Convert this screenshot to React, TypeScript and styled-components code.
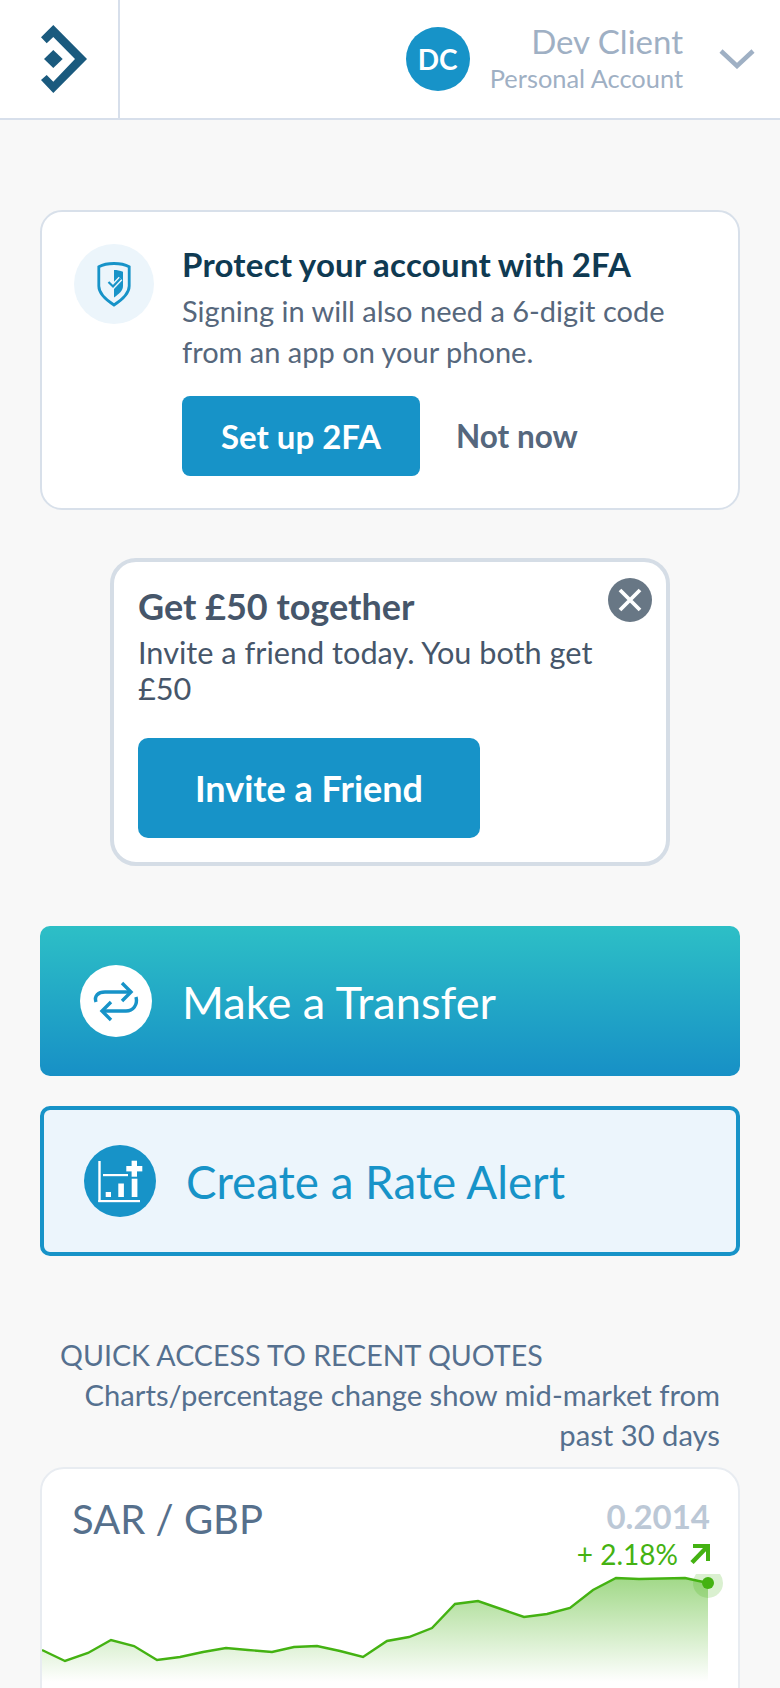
import styled, { createGlobalStyle } from 'styled-components';

const blue = '#1793c8';

const GlobalStyle = createGlobalStyle`
  html, body {
    margin: 0;
    padding: 0;
    background: #f8f8f8;
  }
  * {
    box-sizing: border-box;
  }
`;

const chartPoints: [number, number][] = [
  [0, 76], [23, 87], [46, 79], [69, 66], [92, 72], [115, 86], [138, 83], [161, 78],
  [184, 74], [206, 76], [230, 78], [252, 73], [275, 72], [298, 77], [321, 83], [345, 67],
  [367, 63], [390, 54], [413, 30], [436, 27], [459, 35], [482, 43], [505, 40], [528, 34],
  [551, 16], [574, 4], [597, 5], [620, 4.5], [643, 4], [666, 9],
];

const linePoints = chartPoints.map(([x, y]) => `${x},${y}`).join(' ');

function Logo() {
  return (
    <svg width="48" height="70" viewBox="40 25 48 70" fill="#1a5a7e">
      <polygon points="53.3,26 87,60 53.3,94 41,81 46.7,76 53.3,82.7 75,60 53.3,38 46.7,44.3 41,38.3" />
      <polygon points="53.3,51 62.7,60 53.3,69 44,60" />
    </svg>
  );
}

function ShieldIcon() {
  return (
    <svg width="36" height="46" viewBox="0 0 36 46" fill="none">
      <path
        d="M18 2.500C23 2.500 29 3.500 33.200 5.800V25C33.200 33 25 39.500 18 44C11 39.500 2.800 33 2.800 25V5.800C7 3.500 13 2.500 18 2.500Z"
        stroke={blue}
        strokeWidth="2.800"
      />
      <path d="M18 9C21 9 24 9.500 27 10.800V25C27 29.500 23 33 18 36.500Z" fill={blue} />
      <path d="M12.500 21L17 25.500L24.500 17.500" stroke="#ecf5fb" strokeWidth="5" />
      <path d="M12.500 21L17 25.500L24.500 17.500" stroke={blue} strokeWidth="2.200" />
    </svg>
  );
}

function TransferIcon() {
  return (
    <svg width="72" height="72" viewBox="4 4 72 72" fill="none" stroke={blue} strokeWidth="3.400">
      <path d="M20 41C18 35 22 31 29 31H54" />
      <path d="M46 22L55 31L46 40" />
      <path d="M60 36C62 44 57 50 50 50H26" />
      <path d="M35 41L26 50L35 59" />
    </svg>
  );
}

function AlertIcon() {
  return (
    <svg width="72" height="72" viewBox="4 4 72 72" fill="#fff">
      <rect x="18.300" y="20" width="2.400" height="41" />
      <rect x="18.300" y="59" width="41.700" height="2.200" />
      <rect x="23" y="33" width="25" height="2.200" />
      <rect x="25.700" y="51" width="5.300" height="5" />
      <rect x="38.300" y="42.500" width="5.600" height="13.500" />
      <rect x="51.700" y="37.700" width="5.700" height="18.300" />
      <rect x="51.600" y="19.700" width="5.400" height="16" />
      <rect x="46.300" y="25" width="16" height="5.400" />
    </svg>
  );
}

function Chart() {
  return (
    <ChartSvg viewBox="0 0 696 114">
      <defs>
        <linearGradient id="chartFill" x1="0" y1="0" x2="0" y2="1">
          <stop offset="0" stopColor="#44b212" stopOpacity="0.5" />
          <stop offset="1" stopColor="#44b212" stopOpacity="0" />
        </linearGradient>
      </defs>
      <polygon points={`0,108 ${linePoints} 666,108`} fill="url(#chartFill)" />
      <polyline points={linePoints} fill="none" stroke="#44b212" strokeWidth="2.400" />
      <circle cx="666" cy="9" r="15" fill="#44b212" fillOpacity="0.2" />
      <circle cx="666" cy="9" r="6" fill="#44b212" />
    </ChartSvg>
  );
}

export default function App() {
  return (
    <Page>
      <GlobalStyle />
      <Header>
        <LogoCell>
          <Logo />
        </LogoCell>
        <Account>
          <Avatar>DC</Avatar>
          <AccountText>
            <AccountName>Dev Client</AccountName>
            <AccountType>Personal Account</AccountType>
          </AccountText>
          <svg width="36" height="20" viewBox="0 0 36 20" fill="none" stroke="#9fb0c4" strokeWidth="4.500">
            <path d="M2 2L18 17L34 2" />
          </svg>
        </Account>
      </Header>

      <Main>
        <SecurityCard>
          <IconCircle>
            <ShieldIcon />
          </IconCircle>
          <SecurityBody>
            <SecurityTitle>Protect your account with 2FA</SecurityTitle>
            <SecurityText>
              Signing in will also need a 6-digit code
              <br />
              from an app on your phone.
            </SecurityText>
            <SecurityActions>
              <SetupButton>Set up 2FA</SetupButton>
              <LaterButton>Not now</LaterButton>
            </SecurityActions>
          </SecurityBody>
        </SecurityCard>

        <PromoCard>
          <CloseButton aria-label="Close">
            <svg width="26" height="26" viewBox="0 0 26 26" stroke="#fff" strokeWidth="3.800">
              <path d="M3 3L23 23M23 3L3 23" />
            </svg>
          </CloseButton>
          <PromoTitle>Get £50 together</PromoTitle>
          <PromoText>Invite a friend today. You both get £50</PromoText>
          <InviteButton>Invite a Friend</InviteButton>
        </PromoCard>

        <TransferAction>
          <ActionIcon $filled={false}>
            <TransferIcon />
          </ActionIcon>
          Make a Transfer
        </TransferAction>

        <AlertAction>
          <ActionIcon $filled>
            <AlertIcon />
          </ActionIcon>
          Create a Rate Alert
        </AlertAction>

        <QuotesHeading>QUICK ACCESS TO RECENT QUOTES</QuotesHeading>
        <QuotesNote>Charts/percentage change show mid-market from past 30 days</QuotesNote>

        <QuoteCard>
          <QuoteHeader>
            <Pair>SAR / GBP</Pair>
            <QuoteFigures>
              <Rate>0.2014</Rate>
              <Change>
                + 2.18%
                <svg width="20" height="20" viewBox="0 0 20 20" fill="none" stroke="#44b212" strokeWidth="4">
                  <path d="M3 2H18V17" />
                  <path d="M17 3L2 18.500" strokeWidth="4.500" />
                </svg>
              </Change>
            </QuoteFigures>
          </QuoteHeader>
          <Chart />
        </QuoteCard>
      </Main>
    </Page>
  );
}

const Page = styled.div`
  height: 1688px;
  overflow: hidden;
  font-family: Lato, 'Open Sans', sans-serif;
  color: #56677c;
  background: #f8f8f8;
`;

const Header = styled.header`
  display: flex;
  align-items: center;
  justify-content: space-between;
  height: 120px;
  background: #fff;
  border-bottom: 2px solid #d7dfeb;
`;

const LogoCell = styled.div`
  display: flex;
  align-items: center;
  height: 100%;
  width: 120px;
  padding-left: 40px;
  border-right: 2px solid #d7dfeb;
`;

const Account = styled.div`
  display: flex;
  align-items: center;
  padding-right: 25px;
`;

const Avatar = styled.div`
  display: flex;
  align-items: center;
  justify-content: center;
  width: 64px;
  height: 64px;
  border-radius: 50%;
  background: ${blue};
  color: #fff;
  font-size: 28px;
  font-weight: 700;
`;

const AccountText = styled.div`
  margin: 0 36px 3px 20px;
  text-align: right;
  color: #9fb0c4;
`;

const AccountName = styled.div`
  margin-bottom: 3px;
  font-size: 33px;
  line-height: 38px;
`;

const AccountType = styled.div`
  font-size: 25.400px;
  line-height: 30px;
`;

const Main = styled.main`
  display: flex;
  flex-direction: column;
  padding: 90px 40px 0;
`;

const SecurityCard = styled.section`
  display: flex;
  height: 300px;
  padding: 32px 32px 0;
  background: #fff;
  border: 2px solid #d8e0ea;
  border-radius: 22px;
`;

const IconCircle = styled.div`
  display: flex;
  flex-shrink: 0;
  align-items: center;
  justify-content: center;
  width: 80px;
  height: 80px;
  border-radius: 50%;
  background: #ecf5fb;
`;

const SecurityBody = styled.div`
  margin-left: 28px;
`;

const SecurityTitle = styled.h2`
  margin: 0;
  color: #0f3a52;
  font-size: 33px;
  line-height: 40px;
  font-weight: 700;
  letter-spacing: 0.25px;
  word-spacing: -1px;
  white-space: nowrap;
`;

const SecurityText = styled.p`
  margin: 6px 0 0;
  font-size: 29px;
  line-height: 41px;
  white-space: nowrap;
`;

const SecurityActions = styled.div`
  display: flex;
  align-items: center;
  margin-top: 24px;
`;

const SetupButton = styled.button`
  width: 238px;
  height: 80px;
  border: 0;
  border-radius: 8px;
  background: ${blue};
  color: #fff;
  font-family: inherit;
  font-size: 33px;
  font-weight: 700;
`;

const LaterButton = styled.button`
  margin-left: 36px;
  padding: 0;
  border: 0;
  background: none;
  color: #55677d;
  font-family: inherit;
  font-size: 31.500px;
  font-weight: 700;
`;

const PromoCard = styled.section`
  position: relative;
  align-self: center;
  width: 560px;
  height: 308px;
  margin-top: 48px;
  padding: 22px 24px 0;
  background: #fff;
  border: 4px solid #d5dde6;
  border-radius: 26px;
`;

const CloseButton = styled.button`
  position: absolute;
  top: 16px;
  right: 14px;
  display: flex;
  align-items: center;
  justify-content: center;
  width: 44px;
  height: 44px;
  padding: 0;
  border: 0;
  border-radius: 50%;
  background: #687785;
`;

const PromoTitle = styled.h2`
  margin: 0;
  color: #46566a;
  font-size: 36px;
  line-height: 44px;
  font-weight: 700;
`;

const PromoText = styled.p`
  margin: 7px 0 0;
  width: 480px;
  color: #46566a;
  font-size: 30.700px;
  line-height: 36px;
`;

const InviteButton = styled.button`
  display: block;
  width: 342px;
  height: 100px;
  margin-top: 31px;
  border: 0;
  border-radius: 10px;
  background: ${blue};
  color: #fff;
  font-family: inherit;
  font-size: 36px;
  font-weight: 700;
`;

const TransferAction = styled.button`
  display: flex;
  align-items: center;
  gap: 30px;
  height: 150px;
  margin-top: 60px;
  padding: 0 40px;
  border: 0;
  border-radius: 10px;
  background: linear-gradient(180deg, #2dbfc6, #1790c6);
  color: #fff;
  font-family: inherit;
  font-size: 45.200px;
`;

const AlertAction = styled.button`
  display: flex;
  align-items: center;
  gap: 30px;
  height: 150px;
  margin-top: 30px;
  padding: 0 40px;
  border: 4px solid ${blue};
  border-radius: 10px;
  background: #ecf5fc;
  color: ${blue};
  font-family: inherit;
  font-size: 45.700px;
`;

const ActionIcon = styled.span<{ $filled: boolean }>`
  display: flex;
  flex-shrink: 0;
  width: 72px;
  height: 72px;
  border-radius: 50%;
  background: ${({ $filled }) => ($filled ? blue : '#fff')};
`;

const QuotesHeading = styled.h3`
  margin: 79px 0 0 20px;
  color: #55708f;
  font-size: 28.600px;
  line-height: 40px;
  font-weight: 400;
  white-space: nowrap;
`;

const QuotesNote = styled.p`
  margin: 0 20px 0 0;
  padding-left: 40px;
  color: #55708f;
  font-size: 29.200px;
  line-height: 40px;
  text-align: right;
`;

const QuoteCard = styled.section`
  margin-top: 12px;
  height: 300px;
  background: #fff;
  border: 2px solid #e8ecf1;
  border-radius: 24px;
`;

const QuoteHeader = styled.div`
  display: flex;
  justify-content: space-between;
  height: 105px;
  padding: 24px 28px 0 30px;
`;

const Pair = styled.div`
  margin-top: 2px;
  color: #56708c;
  font-size: 40px;
  line-height: 48px;
`;

const QuoteFigures = styled.div`
  margin-top: 3px;
  text-align: right;
`;

const Rate = styled.div`
  color: #bcc8d6;
  font-size: 33px;
  line-height: 40px;
  font-weight: 700;
`;

const Change = styled.div`
  display: flex;
  align-items: center;
  gap: 12px;
  margin-top: 1px;
  color: #44b212;
  font-size: 28px;
  line-height: 34px;
`;

const ChartSvg = styled.svg`
  display: block;
  width: 696px;
  height: 114px;
`;
